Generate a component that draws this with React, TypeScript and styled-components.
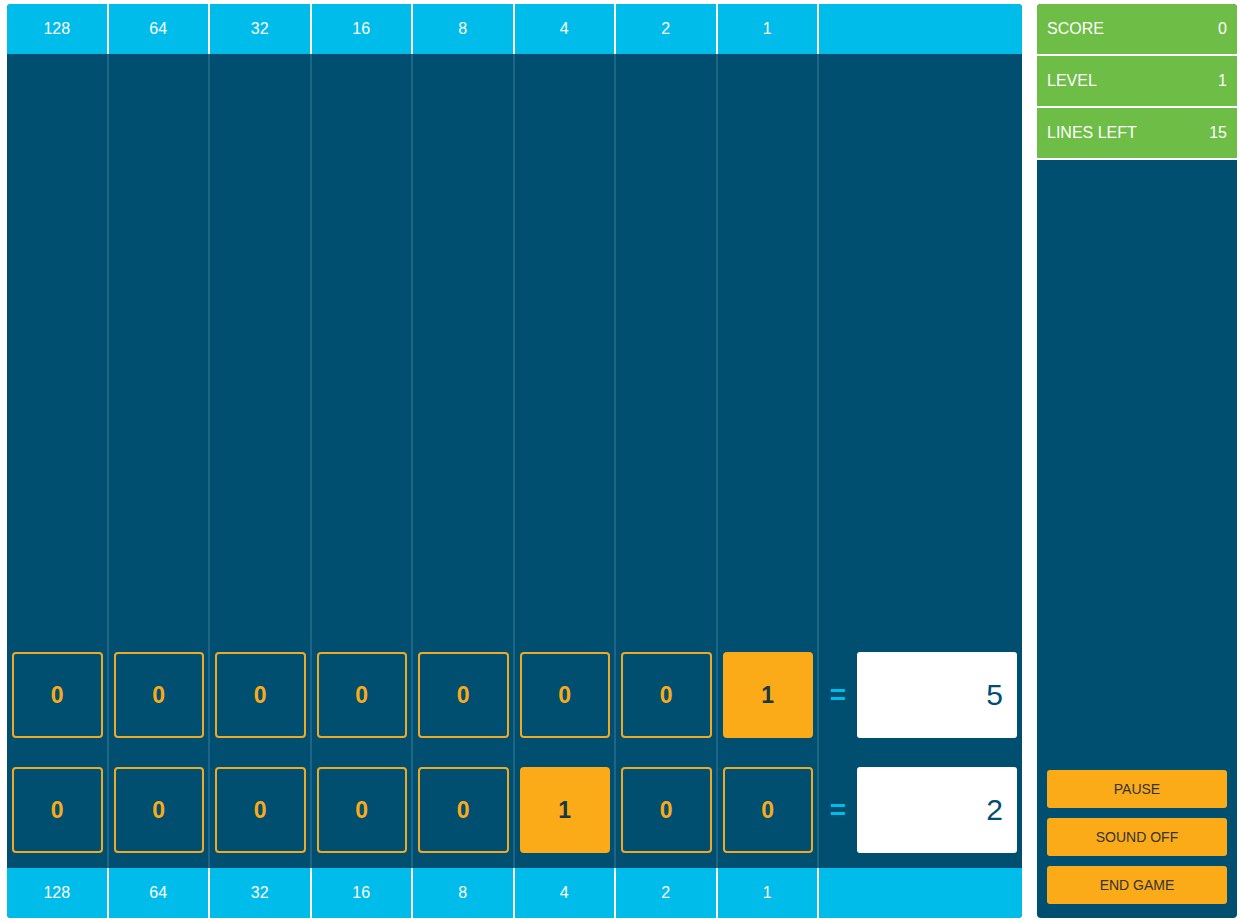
import React from "react";
import styled, { createGlobalStyle } from "styled-components";

const CYAN = "#00bceb";
const DARK = "#004f71";
const GREEN = "#6dbd47";
const ORANGE = "#fbab18";
const LINE = "#1f6686";

const Global = createGlobalStyle`
  html, body { margin: 0; padding: 0; background: #ffffff; }
  body { font-family: "Liberation Sans", Arial, sans-serif; }
  * { box-sizing: border-box; }
`;

const Page = styled.div`
  display: flex;
  gap: 15px;
  height: 922px;
  padding: 4px 2px 4px 7px;
`;

const Board = styled.div`
  width: 1015px;
  display: flex;
  flex-direction: column;
  background: ${DARK};
  border-radius: 4px;
  overflow: hidden;
`;

const Lane = styled.div<{ $h?: number; $grow?: boolean }>`
  display: grid;
  grid-template-columns: repeat(8, 1fr) 2fr;
  height: ${(p) => (p.$h ? `${p.$h}px` : "auto")};
  flex: ${(p) => (p.$grow ? "1" : "none")};
`;

const LabelCell = styled.div`
  background: ${CYAN};
  color: #ffffff;
  font-size: 16px;
  display: flex;
  align-items: center;
  justify-content: center;
  border-right: 2px solid #ffffff;
  &:last-child { border-right: none; }
`;

const BodyCell = styled.div`
  border-right: 2px solid ${LINE};
  padding: 14px 4px 15px 5px;
  display: flex;
  &:last-child { border-right: none; }
`;

const ResultCell = styled.div`
  display: flex;
  align-items: stretch;
  padding: 14px 5px 15px 0;
`;

const Bit = styled.div<{ $on: boolean }>`
  flex: 1;
  border: 2px solid ${(p) => (p.$on ? ORANGE : "#eeaa27")};
  border-radius: 4px;
  background: ${(p) => (p.$on ? ORANGE : "transparent")};
  color: ${(p) => (p.$on ? "#183845" : ORANGE)};
  font-size: 23px;
  font-weight: bold;
  display: flex;
  align-items: center;
  justify-content: center;
`;

const Equals = styled.div`
  width: 38px;
  display: flex;
  align-items: center;
  justify-content: center;
  color: ${CYAN};
  font-size: 28px;
  font-weight: bold;
`;

const Result = styled.div`
  flex: 1;
  background: #ffffff;
  border-radius: 3px;
  color: ${DARK};
  font-size: 30px;
  display: flex;
  align-items: center;
  justify-content: flex-end;
  padding-right: 14px;
`;

const Sidebar = styled.div`
  width: 200px;
  background: ${DARK};
  border-radius: 4px;
  overflow: hidden;
  display: flex;
  flex-direction: column;
`;

const Stat = styled.div`
  height: 52px;
  background: ${GREEN};
  border-bottom: 2px solid #ffffff;
  color: #ffffff;
  font-size: 16px;
  display: flex;
  align-items: center;
  justify-content: space-between;
  padding: 0 10px;
`;

const Spacer = styled.div`
  flex: 1;
`;

const Buttons = styled.div`
  display: flex;
  flex-direction: column;
  gap: 10px;
  padding: 0 10px 14px;
`;

const Button = styled.button`
  height: 38px;
  border: none;
  border-radius: 3px;
  background: ${ORANGE};
  color: #333333;
  font-family: "Liberation Sans", Arial, sans-serif;
  font-size: 14px;
  cursor: pointer;
`;

const weights = [128, 64, 32, 16, 8, 4, 2, 1];
const rows = [
  { bits: [0, 0, 0, 0, 0, 0, 0, 1], value: 5 },
  { bits: [0, 0, 0, 0, 0, 1, 0, 0], value: 2 },
];

const Labels = () => (
  <Lane $h={50}>
    {weights.map((w) => (
      <LabelCell key={w}>{w}</LabelCell>
    ))}
    <LabelCell />
  </Lane>
);

export default function App() {
  return (
    <>
      <Global />
      <Page>
        <Board>
          <Labels />
          <Lane $grow>
            {weights.map((w) => (
              <BodyCell key={w} />
            ))}
            <BodyCell />
          </Lane>
          {rows.map((r, i) => (
            <Lane key={i} $h={115}>
              {r.bits.map((b, j) => (
                <BodyCell key={j}>
                  <Bit $on={b === 1}>{b}</Bit>
                </BodyCell>
              ))}
              <ResultCell>
                <Equals>=</Equals>
                <Result>{r.value}</Result>
              </ResultCell>
            </Lane>
          ))}
          <Labels />
        </Board>
        <Sidebar>
          <Stat>
            <span>SCORE</span>
            <span>0</span>
          </Stat>
          <Stat>
            <span>LEVEL</span>
            <span>1</span>
          </Stat>
          <Stat>
            <span>LINES LEFT</span>
            <span>15</span>
          </Stat>
          <Spacer />
          <Buttons>
            <Button>PAUSE</Button>
            <Button>SOUND OFF</Button>
            <Button>END GAME</Button>
          </Buttons>
        </Sidebar>
      </Page>
    </>
  );
}
